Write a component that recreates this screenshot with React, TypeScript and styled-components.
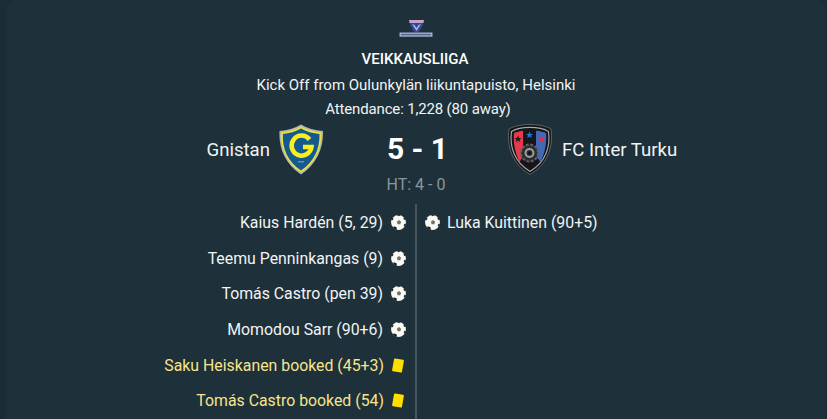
import styled, { createGlobalStyle } from "styled-components";

const Global = createGlobalStyle`
  html, body {
    margin: 0;
    height: 100%;
    background: repeating-conic-gradient(#192b33 0 25%, #1b2d35 0 50%) 0 0 / 2px 2px;
    overflow: hidden;
  }
  #root {
    height: 100%;
  }
`;

const Page = styled.div`
  height: 419px;
  padding: 0 1px 0 6px;
  box-sizing: border-box;
  font-family: Roboto, "Liberation Sans", sans-serif;
`;

const Panel = styled.div`
  height: 100%;
  background: repeating-conic-gradient(#1d2f38 0 25%, #1f313a 0 50%) 0 0 / 2px 2px;
  border-radius: 10px 10px 0 0;
  display: flex;
  flex-direction: column;
  padding-top: 20px;
  box-sizing: border-box;
  overflow: hidden;
`;

const Header = styled.div`
  display: flex;
  flex-direction: column;
  align-items: center;
  color: #f1f4f5;
`;

const LeagueLogo = styled.svg`
  width: 34px;
  height: 18px;
  margin-bottom: 13px;
`;

const Title = styled.div`
  font-size: 15px;
  font-weight: 500;
  line-height: 17px;
  color: #ffffff;
  margin-bottom: 5px;
  padding-right: 2px;
`;

const Info = styled.div<{ $tight?: boolean }>`
  font-size: 15px;
  line-height: 24px;
  letter-spacing: ${({ $tight }) => ($tight ? "-0.16px" : "0")};
  padding-left: ${({ $tight }) => ($tight ? "4px" : "0")};
`;

const ScoreRow = styled.div`
  display: grid;
  grid-template-columns: 1fr 182px 1fr;
  align-items: center;
  margin-top: 3px;
  height: 51px;
`;

const Team = styled.div<{ $side: "home" | "away" }>`
  display: flex;
  align-items: center;
  justify-content: ${({ $side }) => ($side === "home" ? "flex-end" : "flex-start")};
  gap: 9px;
  font-size: 18.6px;
  color: #f1f4f5;
`;

const Crest = styled.svg`
  width: 46px;
  height: 51px;
  flex: none;
`;

const Score = styled.div`
  text-align: center;
  font-size: 30px;
  font-weight: 700;
  color: #ffffff;
  padding: 0 0 3px 3px;
`;

const HalfTime = styled.div`
  text-align: center;
  font-size: 16px;
  line-height: 20px;
  color: #8a979e;
`;

const Events = styled.div`
  display: grid;
  grid-template-columns: 1fr 2px 1fr;
  margin-top: 9px;
  flex: 1;
  min-height: 0;
`;

const Divider = styled.div`
  background: #47555d;
`;

const EventColumn = styled.div`
  display: flex;
  flex-direction: column;
  padding-top: 1px;
`;

const EventRow = styled.div<{ $side: "home" | "away"; $booked?: boolean }>`
  height: 35.6px;
  flex: none;
  display: flex;
  align-items: center;
  justify-content: flex-start;
  flex-direction: ${({ $side }) => ($side === "home" ? "row-reverse" : "row")};
  gap: ${({ $side }) => ($side === "home" ? "8px" : "7px")};
  padding: ${({ $side }) => ($side === "home" ? "0 9px 0 0" : "0 0 0 8px")};
  font-size: 15.85px;
  color: ${({ $booked }) => ($booked ? "#f6e58d" : "#f1f4f5")};
`;

const BallIcon = styled.svg`
  width: 15px;
  height: 15px;
  flex: none;
`;

const YellowCard = styled.span`
  width: 10px;
  height: 13px;
  margin: 0 3px 0 1px;
  background: #ffdf00;
  border-radius: 1px;
  transform: rotate(10deg);
  flex: none;
`;

const Ball = () => (
  <BallIcon viewBox="0 0 16 16">
    <circle cx="8" cy="8" r="7.9" fill="#fbfaf2" />
    <path d="M8.500 5.400l2.300 1.700-.9 2.700H7.100l-.9-2.700z" fill="#6e7270" />
    <path d="M6 0l2.400 1.200L10.500 0zM16 4.800l-2 .4-.9-2.200 1.600-.6zM0 5.200l2 .3.700-2.200-1.500-.7zM15 12.600l-1.500-1.200.7-2 1.800.5zM3.800 12.300l-2 .2L4 15.400l2.200.600L5.800 13.400z" fill="#1e3039" />
    <path d="M4 12.400l1.800.9-.2 1.700-2-1.100z" fill="#0d1417" />
  </BallIcon>
);

const GNISTAN_SHIELD =
  "M22 .5C28 4 36 6.500 44 7C44.500 24 38 40 22 50.500C6 40-.5 24 .5 7C8 6.500 16 4 22 .5Z";
const INTER_SHIELD =
  "M23 .5C31 .5 39 2 44 5C46.500 22 41 40 23 50.500C5 40-.5 22 2 5C7 2 15 .5 23 .5Z";

const GnistanCrest = () => (
  <Crest viewBox="0 0 46 51">
    <path d={GNISTAN_SHIELD} fill="#b4b8b0" />
    <path d={GNISTAN_SHIELD} fill="#e9e03c" transform="translate(22 25) scale(.92) translate(-22 -25)" />
    <path d={GNISTAN_SHIELD} fill="#145a8f" transform="translate(22 25) scale(.84) translate(-22 -25)" />
    <path d="M30.500 15.500A10 10 0 1 0 32.500 23H24" fill="none" stroke="#fbee1d" strokeWidth="4.500" />
    <rect x="19" y="37" width="6" height="1.500" fill="#6d8ea5" />
  </Crest>
);

const Star = ({ x, y, fill }: { x: number; y: number; fill: string }) => (
  <path
    transform={`translate(${x} ${y})`}
    d="M0-3.600l1 2.500h2.700L1.500.5l.8 2.700L0 1.600-2.300 3.200l.8-2.700-2.200-1.600H-1z"
    fill={fill}
  />
);

const InterCrest = () => (
  <Crest viewBox="0 0 46 51">
    <path d={INTER_SHIELD} fill="#141619" stroke="#6f7173" strokeWidth=".8" />
    <path d={INTER_SHIELD} fill="none" stroke="#a6a8a9" strokeWidth="1.300" transform="translate(23 25) scale(.88) translate(-23 -25)" />
    <path d="M7 9c2-1 6-2 9-2.300V32L12.500 38C8 29 6 18 7 9z" fill="#e8394a" />
    <path d="M29 6.700c4 .3 8 1.300 10 2.300 1 9-1 20-5.500 29L29 32z" fill="#4169b8" />
    <Star x={11} y={15} fill="#1a1c1f" />
    <Star x={22.500} y={11} fill="#1f78d1" />
    <Star x={34.500} y={15} fill="#d8304a" />
    <circle cx="22.500" cy="29" r="8.500" fill="#2a2d30" stroke="#5f6163" strokeWidth="2" strokeDasharray="3 1.500" />
    <circle cx="22.500" cy="29" r="4" fill="none" stroke="#9c9e9f" strokeWidth="2" />
    <circle cx="22.500" cy="29" r="1.500" fill="#0e0f11" />
  </Crest>
);

const homeEvents = [
  { text: "Kaius Hardén (5, 29)", booked: false },
  { text: "Teemu Penninkangas (9)", booked: false },
  { text: "Tomás Castro (pen 39)", booked: false },
  { text: "Momodou Sarr (90+6)", booked: false },
  { text: "Saku Heiskanen booked (45+3)", booked: true },
  { text: "Tomás Castro booked (54)", booked: true },
];

const App = () => {
  return (
    <Page>
      <Global />
      <Panel>
        <Header>
          <LeagueLogo viewBox="0 0 34 18">
            <path d="M10 0h15l-1.500 6L20 12h-5l-3.500-6z" fill="#34478f" />
            <path d="M10 0h15l-.6 3H10.600z" fill="#c6a3c8" />
            <path d="M13 4l4.500 7L22 4l-2.500 1-2 3-2-3z" fill="#a9b4e0" />
            <rect x="0.500" y="12.500" width="33" height="4.200" fill="#a7adcf" />
            <path d="M2 14.600h30" stroke="#56658f" strokeWidth="1.400" />
          </LeagueLogo>
          <Title>VEIKKAUSLIIGA</Title>
          <Info>Kick Off from Oulunkylän liikuntapuisto, Helsinki</Info>
          <Info $tight>Attendance: 1,228 (80 away)</Info>
        </Header>
        <ScoreRow>
          <Team $side="home">
            Gnistan
            <GnistanCrest />
          </Team>
          <Score>5 - 1</Score>
          <Team $side="away">
            <InterCrest />
            FC Inter Turku
          </Team>
        </ScoreRow>
        <HalfTime>HT: 4 - 0</HalfTime>
        <Events>
          <EventColumn>
            {homeEvents.map((e) => (
              <EventRow $side="home" $booked={e.booked} key={e.text}>
                {e.booked ? <YellowCard /> : <Ball />}
                {e.text}
              </EventRow>
            ))}
          </EventColumn>
          <Divider />
          <EventColumn>
            <EventRow $side="away">
              <Ball />
              Luka Kuittinen (90+5)
            </EventRow>
          </EventColumn>
        </Events>
      </Panel>
    </Page>
  );
};

export default App;
